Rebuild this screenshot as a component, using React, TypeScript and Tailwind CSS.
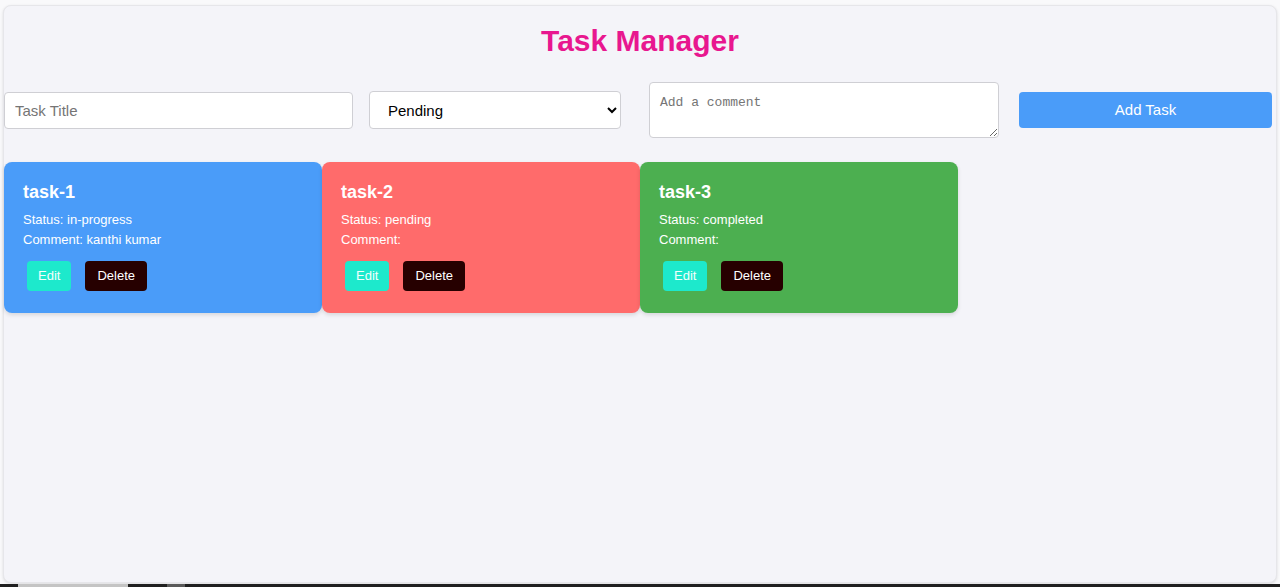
import { useState } from "react"

type Task = { id: number; title: string; status: string; comment: string }

const cardColor: Record<string, string> = {
  "in-progress": "bg-[#4a9cf9]",
  pending: "bg-[#ff6b6b]",
  completed: "bg-[#4caf50]",
}

export default function App() {
  const [tasks] = useState<Task[]>([
    { id: 1, title: "task-1", status: "in-progress", comment: "kanthi kumar" },
    { id: 2, title: "task-2", status: "pending", comment: "" },
    { id: 3, title: "task-3", status: "completed", comment: "" },
  ])

  return (
    <div className="h-[587px] bg-[#f9f9fb] flex flex-col font-['Liberation_Sans',Arial,sans-serif]">
      <div className="flex-1 px-[3px] pt-[5px] pb-[1px]">
        <div className="h-full rounded-lg bg-[#f4f4f9] border border-[#e6e6ea] shadow-[0_1px_3px_rgba(0,0,0,0.12)]">
          <h1 className="pt-[18px] text-center text-[30px] leading-[34px] font-bold text-[#e8178f]">Task Manager</h1>

          <div className="mt-[24px] flex items-center">
            <input
              placeholder="Task Title"
              className="w-[349px] h-[37px] rounded-[4px] border border-[#cfcfd4] bg-white px-[10px] text-[15px] placeholder:text-[#757575] outline-none"
            />
            <select
              defaultValue="pending"
              className="ml-[16px] w-[252px] h-[38px] rounded-[4px] border border-[#cfcfd4] bg-white pl-[14px] pr-2 text-[15px] text-black outline-none"
            >
              <option value="pending">Pending</option>
              <option value="in-progress">In Progress</option>
              <option value="completed">Completed</option>
            </select>
            <textarea
              placeholder="Add a comment"
              className="ml-[28px] w-[350px] h-[56px] rounded-[4px] border border-[#cfcfd4] bg-white px-[10px] pt-[12px] pb-[8px] text-[13px] leading-[16px] font-['Liberation_Mono',monospace] placeholder:text-[#757575] outline-none"
            />
            <button className="ml-[20px] w-[253px] h-[36px] rounded-[4px] bg-[#4a9cf9] text-[15px] text-white">Add Task</button>
          </div>

          <div className="mt-[24px] flex">
            {tasks.map((t) => (
              <div
                key={t.id}
                className={`w-[318px] h-[151px] rounded-lg px-[19px] pt-[19px] text-white shadow-[0_2px_4px_rgba(0,0,0,0.12)] ${cardColor[t.status]}`}
              >
                <h3 className="text-[18px] leading-[22px] font-bold">{t.title}</h3>
                <p className="mt-[7px] text-[13px] leading-[20px]">Status: {t.status}</p>
                <p className="text-[13px] leading-[20px]">Comment: {t.comment}</p>
                <div className="mt-[11px] flex">
                  <button className="ml-[4px] h-[30px] px-[11px] rounded-[4px] bg-[#1de9cc] text-[13px] text-[#f4fffc]">Edit</button>
                  <button className="ml-[14px] h-[30px] px-[12px] rounded-[4px] bg-[#260000] text-[13px] text-white">Delete</button>
                </div>
              </div>
            ))}
          </div>
        </div>
      </div>
      <div className="h-[3px] flex bg-[#202020]">
        <div className="ml-[18px] w-[110px] bg-[#c4c4c4]" />
        <div className="ml-[39px] w-[18px] bg-[#5a5a5a]" />
      </div>
    </div>
  )
}
